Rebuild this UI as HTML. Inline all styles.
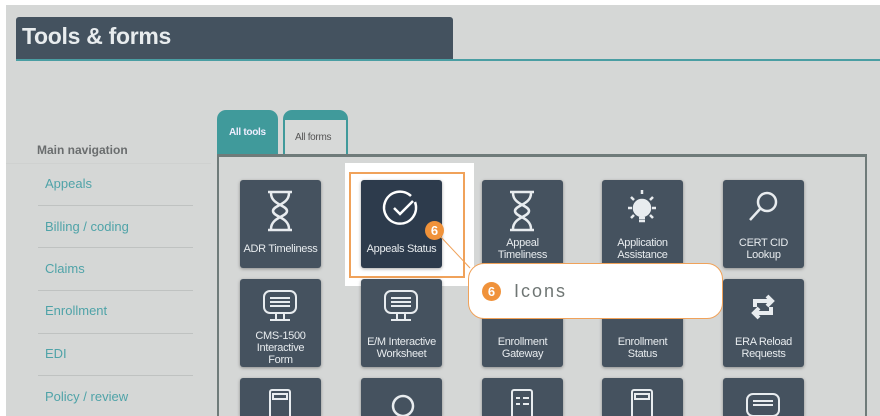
<!DOCTYPE html>
<html><head><style>
*{margin:0;padding:0;box-sizing:border-box}
html,body{width:880px;height:416px;overflow:hidden}
body{background:#fff;font-family:"Liberation Sans",sans-serif}
#w{position:relative;width:880px;height:416px;overflow:hidden}
.bg{position:absolute;left:6px;top:5px;right:0;bottom:0;background:#d5d7d6}
.title{position:absolute;left:16px;top:17px;width:437px;height:42px;background:#44525f;border-radius:3px 3px 0 0;color:#e8ecee;font-weight:bold;font-size:23px;padding:6px 0 0 6px;letter-spacing:-0.3px}
.line{position:absolute;left:16px;right:0;top:59px;height:2px;background:#4a9ea3}
.nav{position:absolute;color:#4fa3a8;font-size:13px;left:45px}
.sep{position:absolute;left:38px;width:155px;height:1px;background:#bfc2c1}
.tab1{position:absolute;left:217px;top:110px;width:61px;height:45px;background:#409a9b;border-radius:9px 9px 0 0;color:#eef;font-size:10px;font-weight:bold;padding:17px 0 0 12px;letter-spacing:-0.3px}
.tab2{position:absolute;left:283px;top:110px;width:65px;height:45px;background:#d7d9d8;border:2px solid #409a9b;border-top:10px solid #409a9b;border-bottom:none;border-radius:9px 9px 0 0;color:#555;font-size:10px;padding:12px 0 0 10px;letter-spacing:-0.3px}
.panel{position:absolute;left:217px;top:154px;width:650px;height:262px;border:2px solid #6f7b7a;border-bottom:none;border-top:3px solid #6f7b7a}
.tile{position:absolute;width:81px;height:88px;background:#45525f;border-radius:3px;box-shadow:0 1px 3px rgba(0,0,0,.35);color:#e8ecef;font-size:11px;text-align:center;line-height:12px;letter-spacing:-0.3px}
.tile svg{position:absolute;left:20px;top:8px}
.tile span{position:absolute;left:0;right:0}
.short{height:38px;border-radius:3px 3px 0 0}
.badge{position:absolute;width:19px;height:19px;border-radius:50%;background:#f0923a;color:#fff;font-weight:bold;font-size:13px;text-align:center;line-height:19px}
</style></head><body><div id="w">
<div class="bg"></div>
<div class="title">Tools &amp; forms</div>
<div class="line"></div>

<div style="position:absolute;left:37px;top:143px;color:#6a6d6e;font-size:12px;font-weight:bold">Main navigation</div>
<div style="position:absolute;left:6px;width:205px;top:163px;height:1px;background:#cfd1d0"></div>
<div class="nav" style="top:176px">Appeals</div><div class="sep" style="top:205px"></div>
<div class="nav" style="top:219px">Billing / coding</div><div class="sep" style="top:247px"></div>
<div class="nav" style="top:261px">Claims</div><div class="sep" style="top:290px"></div>
<div class="nav" style="top:303px">Enrollment</div><div class="sep" style="top:333px"></div>
<div class="nav" style="top:346px">EDI</div><div class="sep" style="top:375px"></div>
<div class="nav" style="top:389px">Policy / review</div>

<div class="tab1">All tools</div>
<div class="tab2">All forms</div>
<div class="panel"></div>

<div style="position:absolute;left:345px;top:163px;width:129px;height:123px;background:#fff"></div>
<div style="position:absolute;left:349px;top:172px;width:116px;height:106px;border:2px solid #f0a25a"></div>

<div class="tile" style="left:240px;top:180px"><svg width="40" height="46" viewBox="0 0 40 46" fill="none" stroke="#e8ecef" stroke-width="2.5"><path d="M8 4h24M8 42h24M11 5c0 12 16 12 16 18s-16 6-16 18M29 5c0 12-16 12-16 18s16 6 16 18"/></svg><span style="top:63px">ADR Timeliness</span></div>
<div class="tile" style="left:361px;top:180px;background:#2d3b4c"><svg width="42" height="42" viewBox="0 0 42 42" fill="none" stroke="#fff" stroke-width="2.5"><path d="M34 14A16 16 0 1 1 30 8"/><path d="M13 20l6 6 13-13"/></svg><span style="top:63px">Appeals Status</span></div>
<div class="tile" style="left:482px;top:180px"><svg width="40" height="46" viewBox="0 0 40 46" fill="none" stroke="#e8ecef" stroke-width="2.5"><path d="M8 4h24M8 42h24M11 5c0 12 16 12 16 18s-16 6-16 18M29 5c0 12-16 12-16 18s16 6 16 18"/></svg><span style="top:57px">Appeal<br>Timeliness</span></div>
<div class="tile" style="left:602px;top:180px"><svg width="40" height="42" viewBox="0 0 40 42" fill="none" stroke="#e8ecef" stroke-width="2.5"><circle cx="20" cy="20" r="8" fill="#e8ecef"/><path d="M17 30h6M17 33h6M20 2v4M6 20h4M30 20h4M9 9l3 3M31 9l-3 3M9 30l3-3M31 30l-3-3"/></svg><span style="top:57px">Application<br>Assistance</span></div>
<div class="tile" style="left:723px;top:180px"><svg width="40" height="42" viewBox="0 0 40 42" fill="none" stroke="#e8ecef" stroke-width="2.5"><circle cx="24" cy="14" r="9"/><path d="M17 21L7 32"/></svg><span style="top:57px">CERT CID<br>Lookup</span></div>

<div class="tile" style="left:240px;top:279px"><svg width="40" height="40" viewBox="0 0 40 40" fill="none" stroke="#e8ecef" stroke-width="2"><rect x="4" y="4" width="32" height="22" rx="6"/><path d="M10 11h20M10 15h20M10 19h20M16 26v6M24 26v6M10 33h20"/></svg><span style="top:51px">CMS-1500<br>Interactive<br>Form</span></div>
<div class="tile" style="left:361px;top:279px"><svg width="40" height="40" viewBox="0 0 40 40" fill="none" stroke="#e8ecef" stroke-width="2"><rect x="4" y="4" width="32" height="22" rx="6"/><path d="M10 11h20M10 15h20M10 19h20M16 26v6M24 26v6M10 33h20"/></svg><span style="top:57px">E/M Interactive<br>Worksheet</span></div>
<div class="tile" style="left:482px;top:279px"><span style="top:57px">Enrollment<br>Gateway</span></div>
<div class="tile" style="left:602px;top:279px"><span style="top:57px">Enrollment<br>Status</span></div>
<div class="tile" style="left:723px;top:279px"><svg width="40" height="40" viewBox="0 0 40 40" fill="none" stroke="#e8ecef" stroke-width="4"><path d="M12 20v-6h16M24 9l5 5-5 5M28 20v6H12M16 31l-5-5 5-5"/></svg><span style="top:57px">ERA Reload<br>Requests</span></div>

<div class="tile short" style="left:240px;top:378px"><svg width="40" height="40" viewBox="0 0 40 40" fill="none" stroke="#e8ecef" stroke-width="2"><rect x="10" y="4" width="20" height="34" rx="2"/><rect x="13" y="8" width="14" height="5"/></svg></div>
<div class="tile short" style="left:361px;top:378px"><svg width="40" height="40" viewBox="0 0 40 40" fill="none" stroke="#e8ecef" stroke-width="2.5"><circle cx="22" cy="20" r="10"/></svg></div>
<div class="tile short" style="left:482px;top:378px"><svg width="40" height="40" viewBox="0 0 40 40" fill="none" stroke="#e8ecef" stroke-width="2"><rect x="10" y="4" width="20" height="34" rx="2"/><path d="M14 12h4M21 12h6M14 18h4M21 18h6"/></svg></div>
<div class="tile short" style="left:602px;top:378px"><svg width="40" height="40" viewBox="0 0 40 40" fill="none" stroke="#e8ecef" stroke-width="2"><rect x="10" y="4" width="20" height="34" rx="2"/><rect x="13" y="8" width="14" height="5"/></svg></div>
<div class="tile short" style="left:723px;top:378px"><svg width="40" height="38" viewBox="0 0 40 38" fill="none" stroke="#e8ecef" stroke-width="2"><rect x="4" y="8" width="32" height="22" rx="6"/><path d="M10 15h20M10 19h20"/></svg></div>

<div class="badge" style="left:425px;top:221px">6</div>
<svg style="position:absolute;left:0;top:0" width="880" height="416"><path d="M440 236L470 268" stroke="#f0a25a" stroke-width="1"/></svg>
<div style="position:absolute;left:468px;top:263px;width:255px;height:56px;background:#fff;border:1.5px solid #f0a25a;border-radius:16px"></div>
<div class="badge" style="left:482px;top:282px">6</div>
<div style="position:absolute;left:514px;top:281px;font-size:18px;color:#6f7674;letter-spacing:2px">Icons</div>
</div></body></html>
